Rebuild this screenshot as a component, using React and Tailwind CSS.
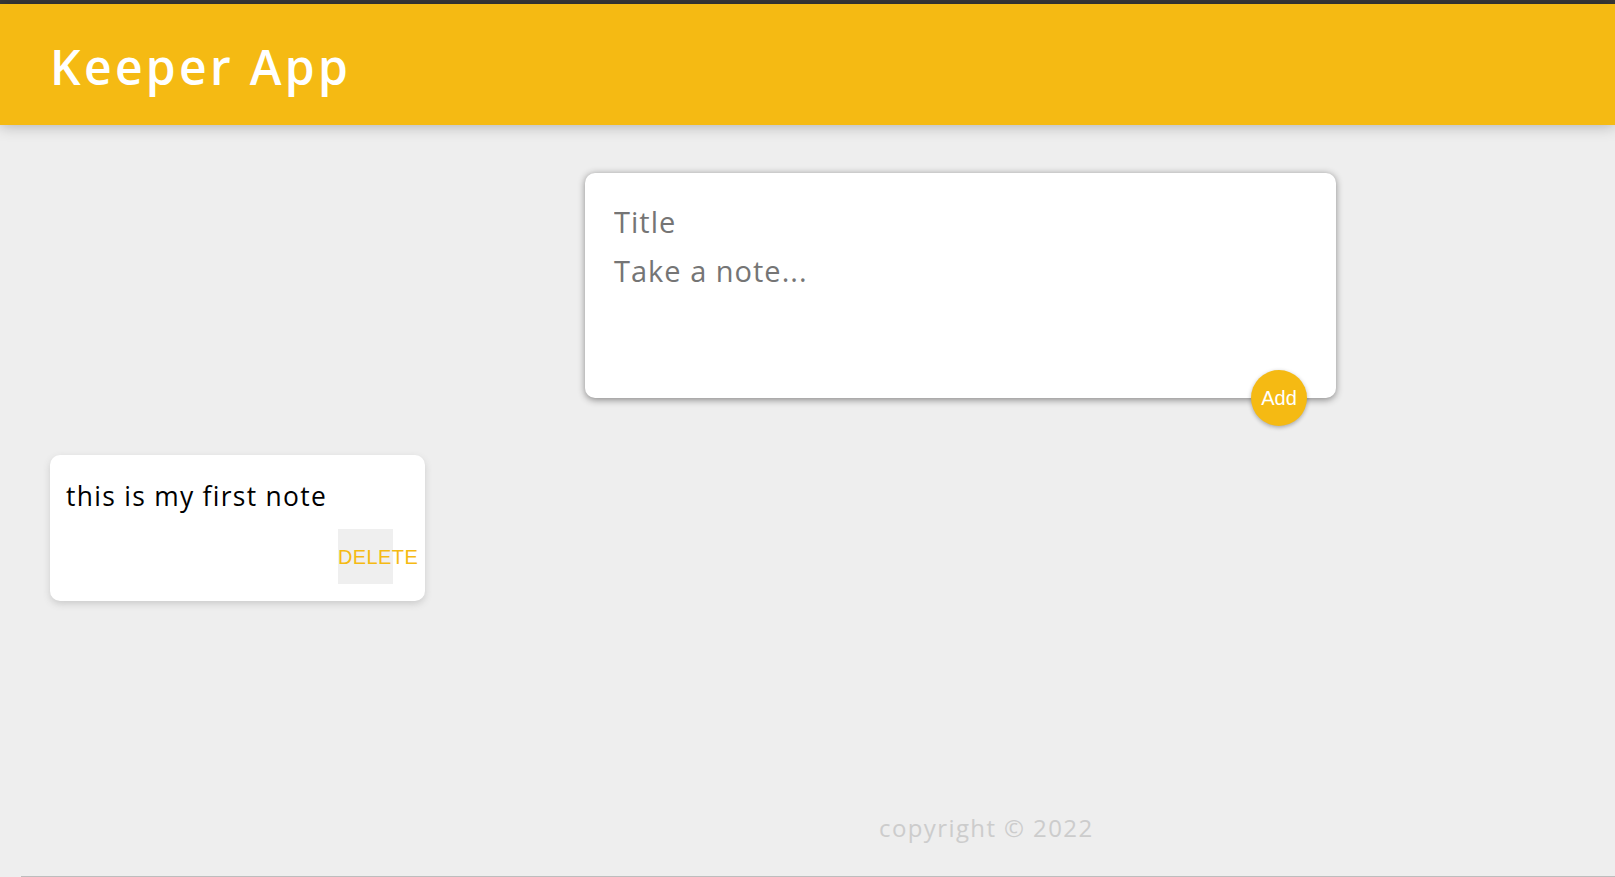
import React, { useState } from 'react';

function Header() {
    return (
        <header className="h-[121px] bg-[#f5ba13] pl-[50px] pt-[34px] shadow-[0_0_15px_0_rgba(0,0,0,0.3)] relative z-10">
            <h1 className="text-[48px] leading-[58px] font-semibold tracking-[3.3px] text-white font-['Open_Sans',sans-serif]">Keeper App</h1>
        </header>
    );
}

function CreateArea({ onAdd }) {
    const [note, setNote] = useState({ title: '', content: '' });

    const handleChange = (e) => {
        const { name, value } = e.target;
        setNote((prev) => ({ ...prev, [name]: value }));
    };

    const submitNote = (e) => {
        e.preventDefault();
        if (!note.title && !note.content) return;
        onAdd(note);
        setNote({ title: '', content: '' });
    };

    return (
        <form onSubmit={submitNote} className="relative ml-[585px] mt-[48px] w-[751px] h-[225px] bg-white rounded-[10px] px-[22px] pt-[24px] shadow-[0_1.5px_7.5px_rgb(138,137,137)]">
            <input name="title" value={note.title} onChange={handleChange} placeholder="Title" className="block w-full h-[49px] px-[7px] text-[29px] tracking-[1px] leading-[49px] outline-none text-black placeholder:text-[#757575] font-['Open_Sans',sans-serif]" />
            <textarea name="content" value={note.content} onChange={handleChange} placeholder="Take a note..." className="block w-full h-[130px] px-[7px] text-[29px] tracking-[1px] leading-[49px] outline-none resize-none text-black placeholder:text-[#757575] font-['Open_Sans',sans-serif]" />
            <button type="submit" className="absolute right-[29px] bottom-[-28px] w-[56px] h-[56px] rounded-full bg-[#f5ba13] text-white text-[20px] shadow-[0_1.5px_4.5px_rgba(0,0,0,0.3)] font-['Liberation_Sans',sans-serif] cursor-pointer">Add</button>
        </form>
    );
}

function Note({ title, content, onDelete }) {
    return (
        <div className="ml-[50px] mt-[57px] w-[375px] bg-white rounded-[10px] pt-[23px] px-[15px] pb-[17px] shadow-[0_3px_7.5px_#ccc]">
            {title && <h1 className="text-[26px] font-semibold mb-[9px]">{title}</h1>}
            <p className="pl-[1px] text-[26.4px] leading-[36px] tracking-[1.3px] text-black mb-[15px] whitespace-pre-wrap font-['Open_Sans',sans-serif]">{content}</p>
            <div className="flex justify-end pr-[17px]">
                <button onClick={onDelete} className="w-[55px] h-[55px] bg-[#efefef] flex items-center justify-start overflow-visible whitespace-nowrap text-[20px] tracking-[0.4px] text-[#f5ba13] font-['Liberation_Sans',sans-serif] cursor-pointer">DELETE</button>
            </div>
        </div>
    );
}

function Footer() {
    return (
        <footer className="mt-auto">
            <p className="pl-[879px] text-[24px] leading-[32px] tracking-[1.4px] text-[#ccc] font-['Open_Sans',sans-serif]">copyright © 2022</p>
            <div className="mt-[32px] ml-[21px] h-px bg-[#bdbdbd]"></div>
        </footer>
    );
}

export default function App() {
    const [notes, setNotes] = useState([{ title: '', content: 'this is my first note' }]);

    const addNote = (note) => setNotes((prev) => [...prev, note]);
    const deleteNote = (id) => setNotes((prev) => prev.filter((_, i) => i !== id));

    return (
        <div className="h-[877px] flex flex-col bg-[#eeeeee] overflow-hidden font-['Open_Sans',sans-serif]">
            <div className="h-[4px] bg-[#3a3a3a]"></div>
            <Header />
            <CreateArea onAdd={addNote} />
            {notes.map((n, i) => (
                <Note key={i} title={n.title} content={n.content} onDelete={() => deleteNote(i)} />
            ))}
            <Footer />
        </div>
    );
}
